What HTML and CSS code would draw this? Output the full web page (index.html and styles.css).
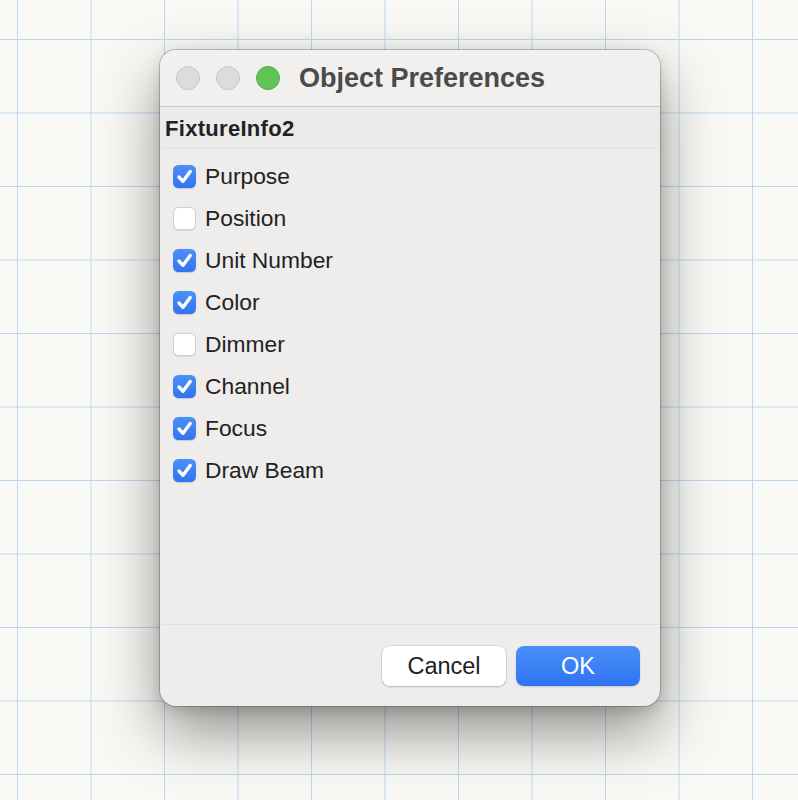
FILE: index.html
```html
<!DOCTYPE html>
<html>
<head>
<meta charset="utf-8">
<link rel="stylesheet" href="styles.css">
</head>
<body>
<div class="window">
  <div class="titlebar">
    <span class="light gray"></span>
    <span class="light gray"></span>
    <span class="light green"></span>
    <span class="title">Object Preferences</span>
  </div>
  <div class="header">FixtureInfo2</div>
  <div class="list">
    <div class="row"><span class="box on"><svg viewBox="0 0 23 23"><path d="M6 12 L10 16.3 L17.2 6.6"/></svg></span><span class="label">Purpose</span></div>
    <div class="row"><span class="box"></span><span class="label">Position</span></div>
    <div class="row"><span class="box on"><svg viewBox="0 0 23 23"><path d="M6 12 L10 16.3 L17.2 6.6"/></svg></span><span class="label">Unit Number</span></div>
    <div class="row"><span class="box on"><svg viewBox="0 0 23 23"><path d="M6 12 L10 16.3 L17.2 6.6"/></svg></span><span class="label">Color</span></div>
    <div class="row"><span class="box"></span><span class="label">Dimmer</span></div>
    <div class="row"><span class="box on"><svg viewBox="0 0 23 23"><path d="M6 12 L10 16.3 L17.2 6.6"/></svg></span><span class="label">Channel</span></div>
    <div class="row"><span class="box on"><svg viewBox="0 0 23 23"><path d="M6 12 L10 16.3 L17.2 6.6"/></svg></span><span class="label">Focus</span></div>
    <div class="row"><span class="box on"><svg viewBox="0 0 23 23"><path d="M6 12 L10 16.3 L17.2 6.6"/></svg></span><span class="label">Draw Beam</span></div>
  </div>
  <div class="footer">
    <button class="btn cancel">Cancel</button>
    <button class="btn ok">OK</button>
  </div>
</div>
</body>
</html>
```

FILE: styles.css
```css
html, body {
  margin: 0;
  padding: 0;
}
body {
  width: 798px;
  height: 800px;
  overflow: hidden;
  background-color: #f8f9f4;
  background-image:
    linear-gradient(to right, #bcd8f0 1px, transparent 1px),
    linear-gradient(to bottom, #bcd8f0 1px, transparent 1px);
  background-size: 73.5px 73.5px;
  background-position: 17px 39px;
  font-family: "Liberation Sans", Arial, sans-serif;
  padding: 50px 0 0 160px;
  box-sizing: border-box;
}
.window {
  width: 500px;
  height: 656px;
  background: #eeedeb;
  border-radius: 16px;
  box-shadow: 0 0 0 1px rgba(0,0,0,0.2), 0 26px 60px rgba(0,0,0,0.42), 0 4px 14px rgba(0,0,0,0.14);
  display: flex;
  flex-direction: column;
  overflow: hidden;
}
.titlebar {
  height: 56px;
  background: #f1f0ee;
  border-bottom: 1px solid #cbcac8;
  display: flex;
  align-items: center;
  padding-left: 16px;
  gap: 16px;
  flex-shrink: 0;
}
.light {
  width: 22px;
  height: 22px;
  border-radius: 50%;
  flex-shrink: 0;
}
.light.gray {
  background: #dcdcdb;
  border: 1px solid #c6c6c5;
}
.light.green {
  background: #5fc454;
  border: 1px solid #52ad47;
}
.title {
  font-weight: bold;
  font-size: 27px;
  color: #4b4b4b;
  margin-left: 3px;
  padding-top: 1px;
}
.header {
  height: 41px;
  background: #ebebea;
  font-weight: bold;
  font-size: 22px;
  letter-spacing: 0.3px;
  color: #222;
  padding-left: 5px;
  line-height: 44px;
  flex-shrink: 0;
}
.list {
  margin-left: 2px;
  margin-right: 2px;
  height: 477px;
  background: #eeedeb;
  border-top: 1px solid #e3e2e0;
  border-bottom: 1px solid #e3e2e0;
  padding-top: 6px;
  box-sizing: border-box;
  flex-shrink: 0;
}
.row {
  height: 42px;
  display: flex;
  align-items: center;
  padding-left: 11px;
}
.box {
  width: 23px;
  height: 23px;
  border-radius: 5.5px;
  background: #ffffff;
  box-shadow: inset 0 0 0 1px #cfcfcf, 0 0.5px 1px rgba(0,0,0,0.08);
  box-sizing: border-box;
  flex-shrink: 0;
  display: flex;
}
.box.on {
  background: linear-gradient(#4c90f8, #3174f3);
  box-shadow: 0 0.5px 1px rgba(0,0,0,0.15);
}
.box svg {
  width: 23px;
  height: 23px;
}
.box path {
  fill: none;
  stroke: #ffffff;
  stroke-width: 3.4;
  stroke-linecap: round;
  stroke-linejoin: round;
}
.label {
  margin-left: 9px;
  font-size: 22.8px;
  color: #222;
  padding-top: 1px;
}
.footer {
  flex: 1;
  display: flex;
  justify-content: flex-end;
  align-items: flex-start;
  padding: 21px 20px 0 0;
  gap: 10px;
}
.btn {
  width: 124px;
  height: 40px;
  border: none;
  border-radius: 8px;
  font-family: "Liberation Sans", Arial, sans-serif;
  font-size: 23.5px;
  padding: 0;
}
.btn.cancel {
  background: #ffffff;
  color: #222;
  box-shadow: 0 0 0 0.5px rgba(0,0,0,0.15), 0 1px 2px rgba(0,0,0,0.18);
}
.btn.ok {
  background: linear-gradient(#4a8ff8, #2f73f4);
  color: #ffffff;
  box-shadow: 0 1px 2px rgba(0,0,0,0.15);
}
```
